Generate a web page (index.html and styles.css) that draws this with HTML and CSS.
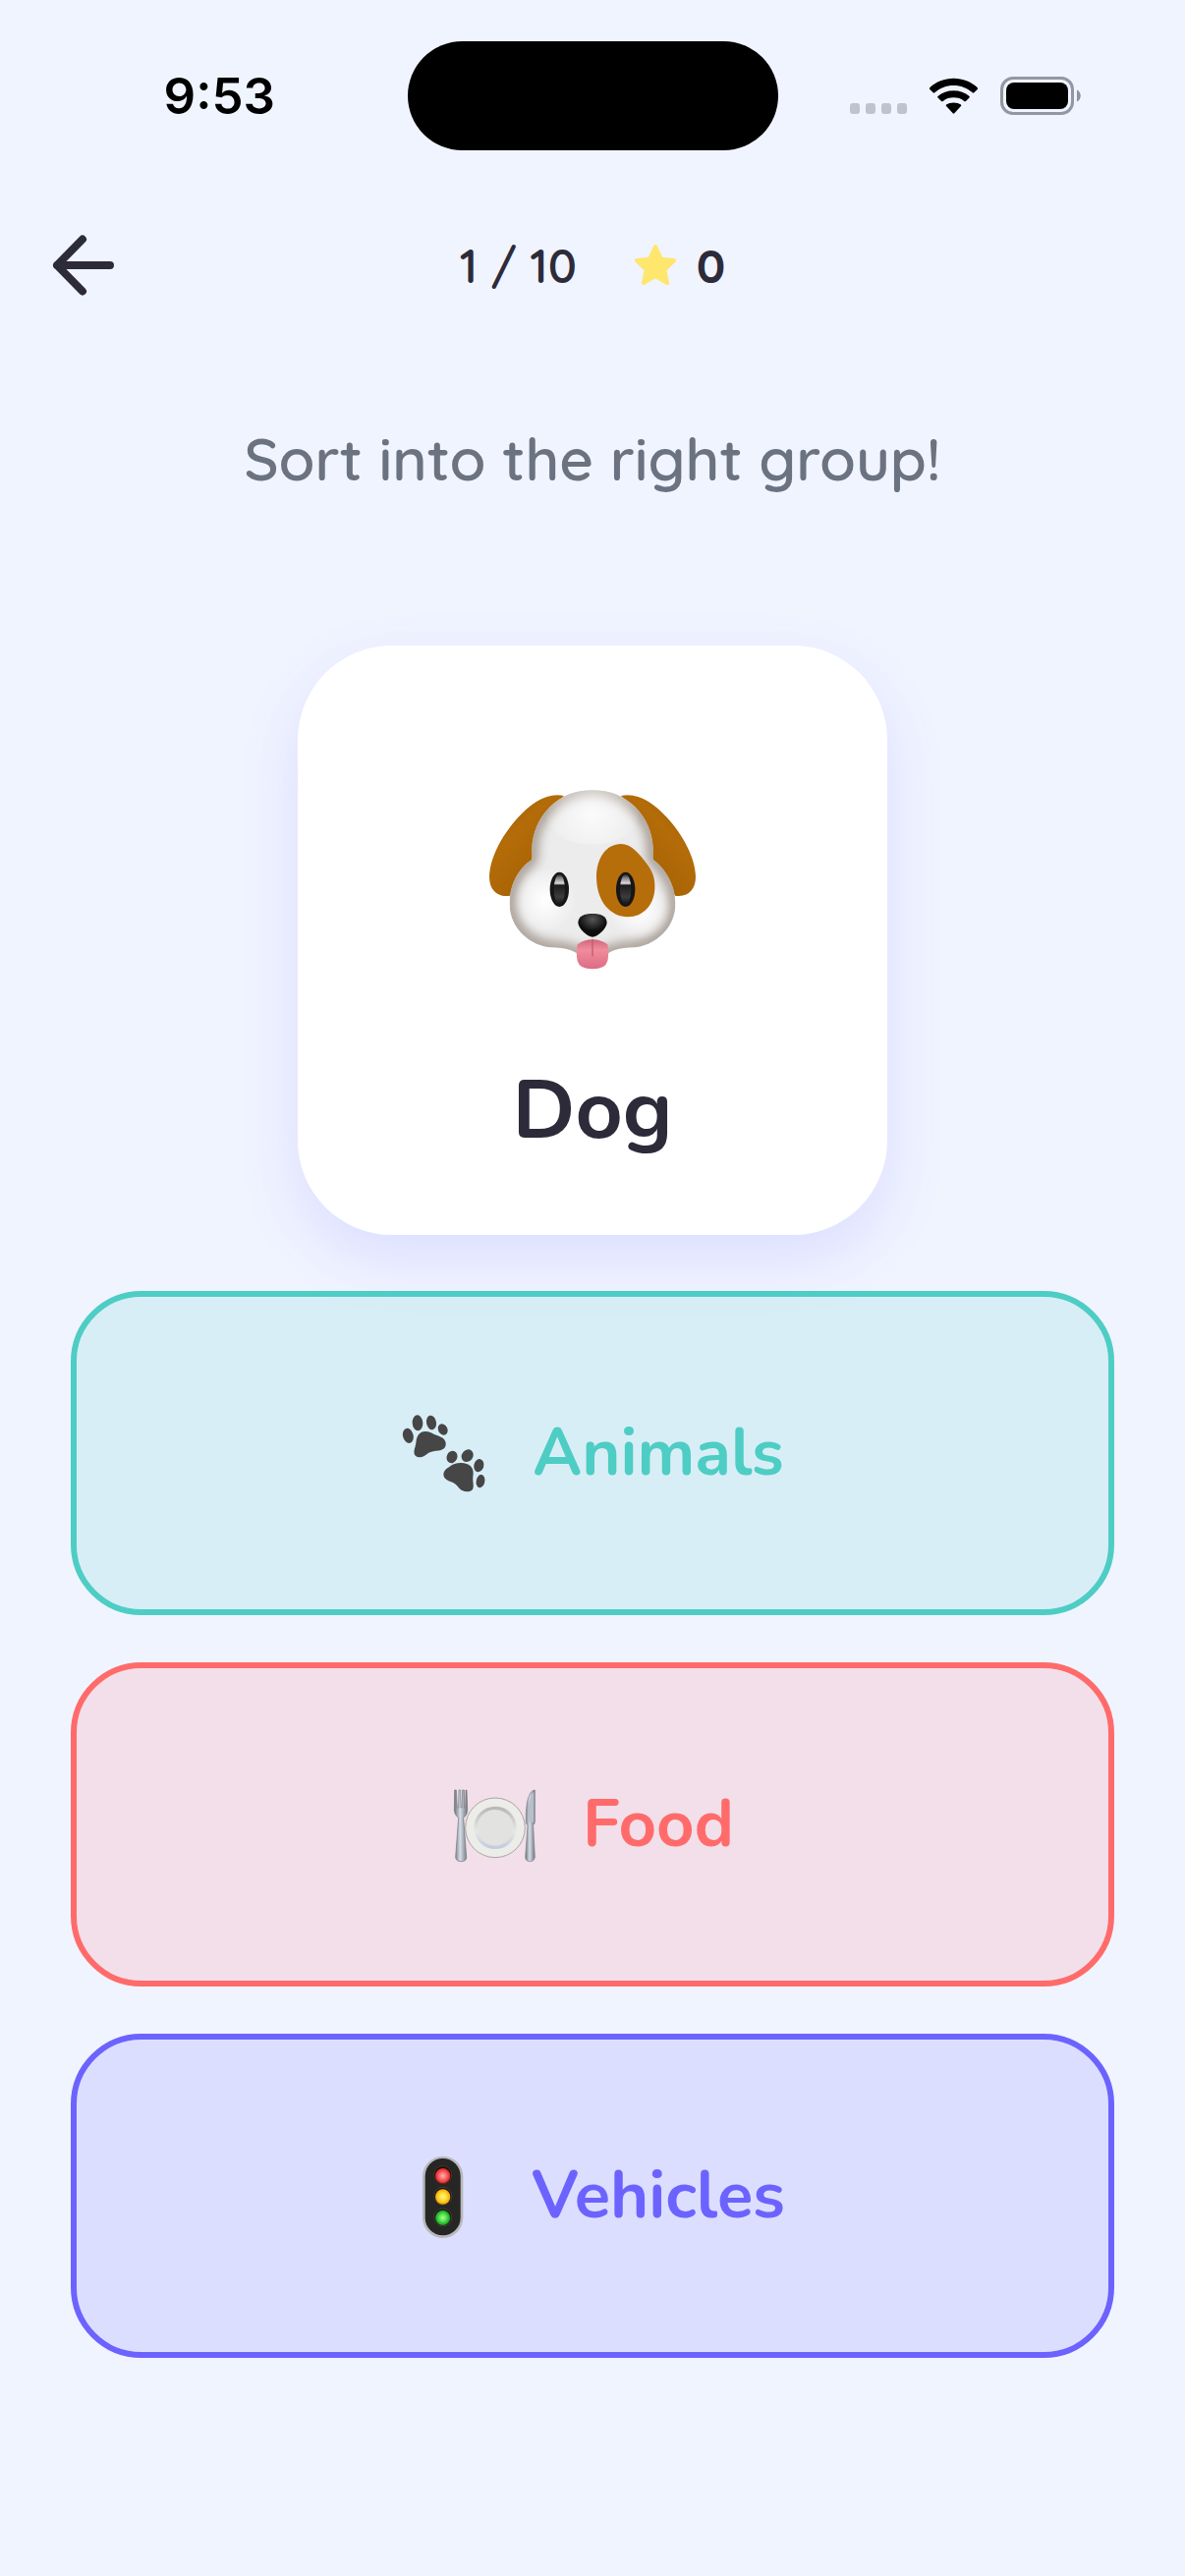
FILE: index.html
```html
<!DOCTYPE html>
<html lang="en">
<head>
    <meta charset="UTF-8">
    <meta name="viewport" content="width=device-width, initial-scale=1.0">
    <title>Sorting Game</title>
    <link rel="stylesheet" href="styles.css">
</head>
<body>
    <div class="status-bar">
        <span class="time">9:53</span>
        <div class="island"></div>
        <div class="status-icons">
            <svg class="dots" width="58" height="12" viewBox="0 0 58 12" fill="#bfc3ce" aria-hidden="true">
                <rect x="0" width="10" height="11" rx="3"/>
                <rect x="16" width="10" height="11" rx="3"/>
                <rect x="32" width="10" height="11" rx="3"/>
                <rect x="48" width="10" height="11" rx="3"/>
            </svg>
            <svg width="51" height="38" viewBox="0 0 52 38" aria-hidden="true">
                <path d="M1.2 10.2Q0.6 11 1.3 11.8L4.8 15.3Q5.6 16 6.4 15.3C11.600 10.400 18.500 7.700 26 7.700S40.400 10.400 45.600 15.300Q46.400 16 47.200 15.300L50.700 11.800Q51.400 11 50.800 10.200C44.200 4 35.500 0.500 26 0.500S7.800 4 1.200 10.200Z"/>
                <path d="M9.600 18.900Q9 19.700 9.700 20.500L13.300 24Q14.100 24.700 15 24C18 21.500 21.800 20.400 26 20.400S34 21.500 37 24Q37.900 24.700 38.700 24L42.300 20.500Q43 19.700 42.400 18.900C38 15.200 32.300 13.200 26 13.200S14 15.200 9.600 18.900Z"/>
                <path d="M18.400 27.700Q17.700 28.500 18.400 29.300L25.200 36.600Q26 37.400 26.800 36.600L33.600 29.300Q34.300 28.500 33.600 27.700C31.600 26.300 29 25.600 26 25.600S20.400 26.300 18.400 27.700Z"/>
            </svg>
            <svg width="82" height="39" viewBox="0 0 82 39" aria-hidden="true">
                <rect x="1.500" y="1.500" width="72" height="36" rx="11.500" fill="none" stroke="#9396a3" stroke-width="3"/>
                <rect x="6" y="6" width="63" height="27" rx="8"/>
                <path d="M78 13.500C83 15.500 83 23.500 78 25.500Z" fill="#8f929e"/>
            </svg>
        </div>
    </div>

    <header class="top-bar">
        <button type="button" class="back" aria-label="Back">
            <svg width="64" height="64" viewBox="0 0 64 64" aria-hidden="true">
                <path d="M31 5.500L5 32L31 58.500M5 32H59" fill="none" stroke="currentColor" stroke-width="8" stroke-linecap="round" stroke-linejoin="round"/>
            </svg>
        </button>
        <div class="progress">
            <span>1 / 10</span>
            <span class="score">
                <svg width="44" height="44" viewBox="0 0 44 44" aria-hidden="true">
                    <path d="M22 3L28 15.800L41 17L31.300 26.700L34 40L22 33L10 40L12.700 26.700L3 17L16 15.800Z" fill="#ffe66d" stroke="#ffe66d" stroke-width="4" stroke-linejoin="round"/>
                </svg>
                <b>0</b>
            </span>
        </div>
    </header>

    <main>
        <h1>Sort into the right group!</h1>

        <div class="card">
            <svg width="214" height="185" viewBox="80 130 640 555" role="img" aria-label="Dog face">
                <defs>
                    <path id="face" d="M400 134C350 134 305 150 270 185C235 220 217 265 215 310C214 330 218 340 212 348C175 372 147 420 147 480C147 560 215 610 275 614C320 616 335 622 352 632H448C465 622 480 616 525 614C585 610 653 560 653 480C653 420 620 372 588 348C582 340 586 330 585 310C583 265 565 220 530 185C495 150 450 134 400 134Z"/>
                    <clipPath id="faceClip"><use href="#face"/></clipPath>
                    <filter id="soft" x="-20%" y="-20%" width="140%" height="140%"><feGaussianBlur stdDeviation="18"/></filter>
                    <radialGradient id="shine" gradientUnits="userSpaceOnUse" cx="400" cy="205" r="150">
                        <stop offset="0" stop-color="#fff" stop-opacity="0.8"/>
                        <stop offset="1" stop-color="#fff" stop-opacity="0"/>
                    </radialGradient>
                    <radialGradient id="cheek">
                        <stop offset="0" stop-color="#fff"/>
                        <stop offset="1" stop-color="#fff" stop-opacity="0"/>
                    </radialGradient>
                    <linearGradient id="ear" x1="0" y1="0" x2="0.8" y2="1">
                        <stop offset="0" stop-color="#9a5d10"/>
                        <stop offset="0.4" stop-color="#b36c08"/>
                        <stop offset="0.75" stop-color="#a96405"/>
                        <stop offset="1" stop-color="#7e4b0d"/>
                    </linearGradient>
                    <linearGradient id="eye" x1="0" y1="0" x2="0" y2="1">
                        <stop offset="0" stop-color="#222"/>
                        <stop offset="0.1" stop-color="#777"/>
                        <stop offset="0.3" stop-color="#dcdce2"/>
                        <stop offset="0.36" stop-color="#1b1b1b"/>
                        <stop offset="0.75" stop-color="#3c3c3c"/>
                        <stop offset="1" stop-color="#151515"/>
                    </linearGradient>
                    <radialGradient id="nose" cx="0.5" cy="0.25" r="0.5">
                        <stop offset="0" stop-color="#555"/>
                        <stop offset="1" stop-color="#0d0d0d"/>
                    </radialGradient>
                    <linearGradient id="tongue" x1="0" y1="0" x2="0" y2="1">
                        <stop offset="0" stop-color="#d2667b"/>
                        <stop offset="0.35" stop-color="#f08c9c"/>
                        <stop offset="1" stop-color="#dc6b84"/>
                    </linearGradient>
                </defs>
                <path id="leftEar" d="M313 151C265 139 215 170 170 220C125 270 86 340 85 398C85 436 106 462 148 456L220 350L250 215Z" fill="url(#ear)"/>
                <use href="#leftEar" transform="translate(800 0) scale(-1 1)"/>
                <use href="#face" fill="#ececec"/>
                <g clip-path="url(#faceClip)">
                    <use href="#face" fill="none" stroke="#9c9085" stroke-width="34" filter="url(#soft)"/>
                    <ellipse cx="400" cy="215" rx="140" ry="85" fill="url(#shine)"/>
                    <ellipse cx="255" cy="470" rx="95" ry="100" fill="url(#cheek)"/>
                    <ellipse cx="545" cy="500" rx="95" ry="90" fill="url(#cheek)"/>
                </g>
                <path d="M487 298C520 298 545 330 568 362C585 385 592 405 590 437C587 485 555 521 508 521C455 520 413 475 412 400C412 340 443 298 487 298Z" fill="#b66e0b"/>
                <ellipse cx="299" cy="437" rx="29" ry="53" fill="#161616"/>
                <ellipse cx="299" cy="437" rx="17" ry="46" fill="url(#eye)"/>
                <ellipse cx="501" cy="437" rx="29" ry="53" fill="#161616"/>
                <ellipse cx="501" cy="437" rx="17" ry="46" fill="url(#eye)"/>
                <path d="M354 605Q375 590 400 590T446 605C450 625 449 640 446 655Q440 680 400 680T354 655C351 640 350 625 354 605Z" fill="url(#tongue)"/>
                <path d="M400 590V640" stroke="#c75a70" stroke-width="4" stroke-linecap="round"/>
                <path d="M356 538C357 518 375 511 400 511S443 518 444 538C444 556 416 582 400 582S356 556 356 538Z" fill="url(#nose)"/>
            </svg>
            <h2>Dog</h2>
        </div>

        <div class="groups">
            <button type="button" class="group animals">
                <svg width="90" height="90" viewBox="54 42 270 270" fill="#464646" aria-hidden="true">
                    <path d="M106 124C113 110 130 108 146 115C160 123 170 124 182 131C194 140 194 157 184 164C172 172 153 168 139 176C128 184 121 191 108 190C93 187 92 174 97 160C102 146 99 136 106 124Z"/>
                    <ellipse cx="76" cy="124" rx="16" ry="23" transform="rotate(-14 76 124)"/>
                    <ellipse cx="105" cy="85" rx="16" ry="24" transform="rotate(-4 105 85)"/>
                    <ellipse cx="147" cy="84" rx="15" ry="22" transform="rotate(-10 147 84)"/>
                    <ellipse cx="182" cy="105" rx="14" ry="18" transform="rotate(-28 182 105)"/>
                    <path d="M202 219C216 207 239 204 257 211C274 219 277 233 274 249C272 264 280 282 271 290C260 298 240 295 232 284C225 275 216 266 205 264C189 259 180 247 186 234C190 226 196 224 202 219Z"/>
                    <ellipse cx="210" cy="189" rx="16" ry="19" transform="rotate(25 210 189)"/>
                    <ellipse cx="257" cy="185" rx="17" ry="20" transform="rotate(38 257 185)"/>
                    <ellipse cx="292" cy="215" rx="15" ry="20" transform="rotate(14 292 215)"/>
                    <ellipse cx="297" cy="263" rx="13" ry="20" transform="rotate(10 297 263)"/>
                </svg>
                <span>Animals</span>
            </button>
            <button type="button" class="group food">
                <svg width="90" height="90" viewBox="0 0 270 270" aria-hidden="true">
                    <defs>
                        <linearGradient id="steel">
                            <stop offset="0" stop-color="#6d7278"/>
                            <stop offset="0.45" stop-color="#d5dde6"/>
                            <stop offset="1" stop-color="#6f747c"/>
                        </linearGradient>
                        <linearGradient id="rim" x1="0" y1="0" x2="0" y2="1">
                            <stop offset="0" stop-color="#b9b8b6"/>
                            <stop offset="0.6" stop-color="#e8e8e8"/>
                            <stop offset="1" stop-color="#c3cbdc"/>
                        </linearGradient>
                    </defs>
                    <circle cx="135" cy="145" r="91" fill="#ecece9" stroke="#aaa69f" stroke-width="3"/>
                    <circle cx="135" cy="145" r="60" fill="#e2e2e1" stroke="url(#rim)" stroke-width="10"/>
                    <path d="M11 30H16L19 84H23L24 30H29L30 84H33L35 30H40L41 84H44L45 30H48L50 90Q50 106 38 115L47 234Q48 248 31 248T14 234L23 115Q11 106 10 92Z" fill="url(#steel)" stroke="#70757b" stroke-width="2"/>
                    <path d="M256 30C239 30 230 64 229 104V130Q231 136 234 137L227 234Q227 248 241 248T256 234L251 137Q256 134 256 126Z" fill="url(#steel)" stroke="#7b818b" stroke-width="2"/>
                    <path d="M253 36C241 44 235 76 234 128H253Z" fill="#b9becb"/>
                </svg>
                <span>Food</span>
            </button>
            <button type="button" class="group vehicles">
                <svg width="90" height="90" viewBox="0 0 270 270" aria-hidden="true">
                    <defs>
                        <radialGradient id="red"><stop offset="0" stop-color="#ffb0a8"/><stop offset="0.5" stop-color="#fb6a6a"/><stop offset="1" stop-color="#dd2028"/></radialGradient>
                        <radialGradient id="amber"><stop offset="0" stop-color="#fff58a"/><stop offset="0.5" stop-color="#ffdf35"/><stop offset="1" stop-color="#f6a400"/></radialGradient>
                        <radialGradient id="green"><stop offset="0" stop-color="#a5ff8c"/><stop offset="0.5" stop-color="#55e052"/><stop offset="1" stop-color="#129a1c"/></radialGradient>
                    </defs>
                    <rect x="69" y="14" width="124" height="250" rx="62" fill="#b9b9bd"/>
                    <rect x="77" y="21" width="108" height="235" rx="54" fill="#262624"/>
                    <g fill="#171310" stroke="#55504a" stroke-width="2">
                        <circle cx="131" cy="71" r="27" stroke="#713716"/>
                        <circle cx="131" cy="136" r="27"/>
                        <circle cx="131" cy="201" r="27"/>
                    </g>
                    <circle cx="131" cy="74" r="23" fill="url(#red)"/>
                    <circle cx="131" cy="138" r="23" fill="url(#amber)"/>
                    <circle cx="131" cy="202" r="23" fill="url(#green)"/>
                </svg>
                <span>Vehicles</span>
            </button>
        </div>
    </main>
</body>
</html>
```
FILE: styles.css
```css
* {
    box-sizing: border-box;
}
body {
    font-family: Quicksand, Lato, sans-serif;
    background-color: #f0f4ff;
    color: #2d2b3a;
    margin: 0;
    min-height: 100vh;
    display: flex;
    flex-direction: column;
}
button {
    font: inherit;
    cursor: pointer;
}
svg {
    display: block;
    flex-shrink: 0;
    overflow: visible;
}

/* Phone status bar */
.status-bar {
    display: grid;
    grid-template-columns: 1fr auto 1fr;
    align-items: center;
    height: 195px;
    color: #000;
}
.time {
    font-family: Inter, sans-serif;
    font-size: 51px;
    font-weight: 600;
    text-align: center;
    padding-left: 32px;
}
.island {
    width: 377px;
    height: 111px;
    border-radius: 56px;
    background-color: #000;
}
.status-icons {
    display: flex;
    align-items: center;
    justify-content: center;
    gap: 22px;
    padding-right: 32px;
}
.dots {
    align-self: flex-end;
}

/* Back button and score */
.top-bar {
    display: grid;
    grid-template-columns: 1fr auto 1fr;
    align-items: center;
    height: 150px;
    padding: 0 53px;
}
.back {
    justify-self: start;
    padding: 0;
    border: none;
    background: none;
    color: inherit;
}
.progress {
    display: flex;
    align-items: center;
    gap: 58px;
    font-size: 48px;
    font-weight: 600;
}
.score {
    display: flex;
    align-items: center;
    gap: 20px;
}

main {
    flex: 1;
    display: flex;
    flex-direction: column;
    align-items: center;
    padding: 86px 72px 222px;
}
h1 {
    margin: 0 0 154px;
    font-size: 60px;
    line-height: 72px;
    font-weight: 600;
    color: #6b7280;
    text-align: center;
}
.card {
    display: flex;
    flex-direction: column;
    align-items: center;
    width: 600px;
    max-width: 100%;
    padding: 146px 48px 76px;
    margin-bottom: 57px;
    border-radius: 96px;
    background-color: #fff;
    box-shadow: 0 24px 60px rgba(108, 99, 255, 0.15);
}
.card h2 {
    margin: 92px 0 0;
    font-family: Nunito, Quicksand, Lato, sans-serif;
    font-size: 84px;
    line-height: 101px;
    font-weight: 700;
}

/* Answer buttons */
.groups {
    flex: 1;
    display: flex;
    flex-direction: column;
    gap: 48px;
    width: 100%;
}
.group {
    flex: 1;
    display: flex;
    align-items: center;
    justify-content: center;
    gap: 44px;
    border: 6px solid;
    border-radius: 72px;
    background-clip: padding-box;
    font-family: Nunito, Quicksand, Lato, sans-serif;
    font-size: 67px;
    font-weight: 700;
}
.animals {
    color: #4ecdc4;
    background-color: rgba(78, 205, 196, 0.15);
}
.food {
    color: #ff6b6b;
    background-color: rgba(255, 107, 107, 0.15);
}
.vehicles {
    color: #6c63ff;
    background-color: rgba(108, 99, 255, 0.15);
}
```
